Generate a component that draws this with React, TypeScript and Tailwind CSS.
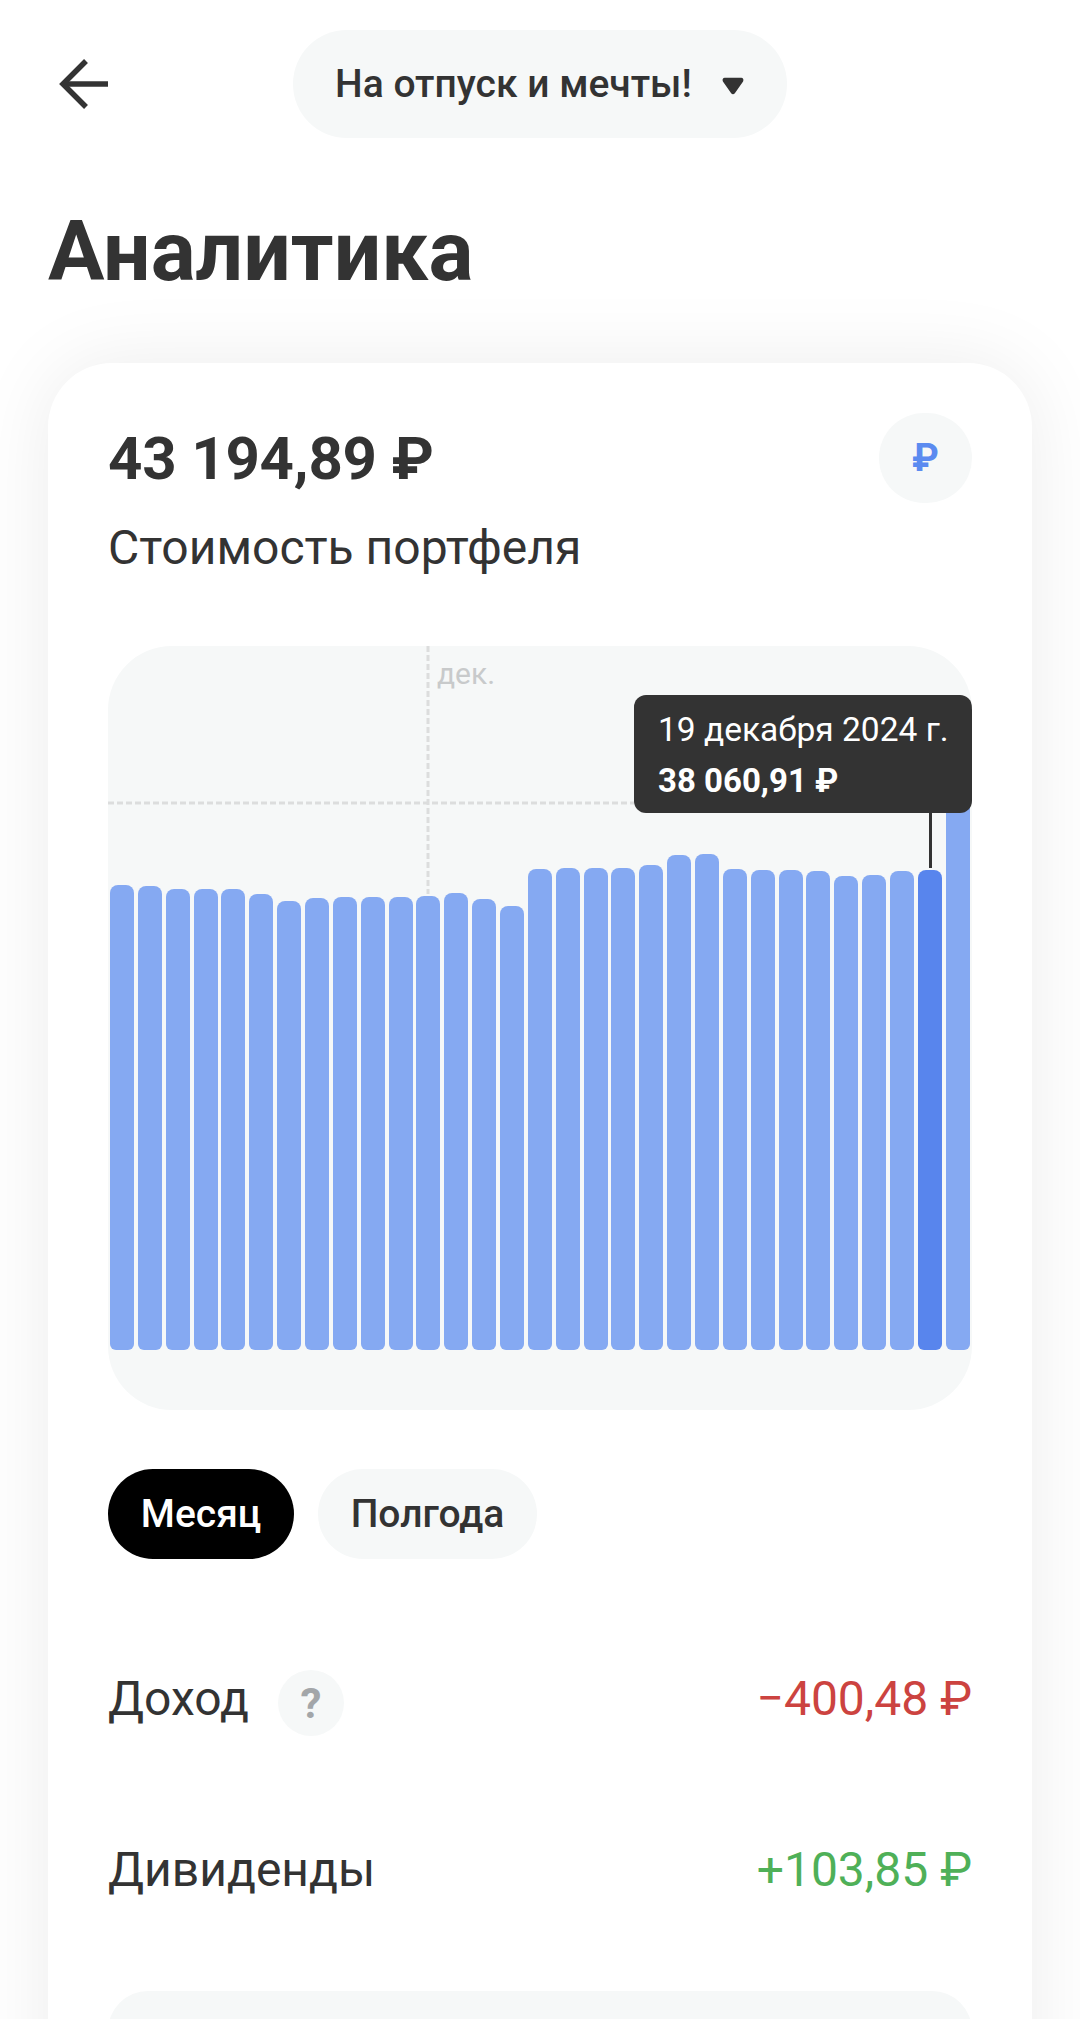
const BAR_TOPS = [
  883, 884, 887, 887, 887, 892, 899, 896, 895, 895, 895, 894, 891, 897, 904, 867, 866,
  866, 866, 863, 853, 852, 867, 868, 868, 869, 874, 873, 869, 868, 780,
];
const CHART_BOTTOM = 1348;
const SELECTED = 29;

function Bars() {
  return (
    <div className="absolute left-[2px] right-[2px] bottom-[60px] flex items-end justify-between">
      {BAR_TOPS.map((top, i) => (
        <div
          key={i}
          className={`w-[24px] rounded-t-[8px] rounded-b-[6px] ${i === SELECTED ? 'bg-[#5885ed]' : 'bg-[#85a9f2]'}`}
          style={{ height: CHART_BOTTOM - top }}
        />
      ))}
    </div>
  );
}

function Chart() {
  return (
    <div className="relative h-[764px] overflow-hidden rounded-[64px] bg-[#f6f8f8]">
      {/* dashed guides */}
      <svg className="absolute left-0 top-0" width="864" height="300" fill="none">
        <path d="M0 157H540" stroke="#dcdddd" strokeWidth="3" strokeDasharray="6 3" />
        <path d="M320 0V248" stroke="#dcdddd" strokeWidth="3" strokeDasharray="6 3" />
      </svg>
      <span className="absolute left-[329px] top-[10px] text-[30px] leading-[36px] text-[#c8cacb]">дек.</span>
      <Bars />
      <div className="absolute left-[821px] top-[160px] h-[62px] w-[3px] bg-[#333333]" />
      <div className="absolute right-0 top-[49px] flex h-[118px] w-[338px] flex-col rounded-[12px] bg-[#333333] pl-[24px] pt-[13px] text-white">
        <span className="text-[33.5px] leading-[44px]">19 декабря 2024 г.</span>
        <span className="mt-[7px] text-[33px] font-bold leading-[44px]">38 060,91 ₽</span>
      </div>
    </div>
  );
}

function StatRow({ label, value, color, help }: { label: string; value: string; color: string; help?: boolean }) {
  return (
    <div className="flex h-[66px] items-center justify-between">
      <div className="flex items-center">
        <span className="-mt-[8px] text-[48px] leading-[60px] text-[#333333]">{label}</span>
        {help && (
          <span className="ml-[29px] flex h-[66px] w-[66px] items-center justify-center rounded-full bg-[#f6f8f8] text-[42px] font-bold text-[#a3a6a9]">
            ?
          </span>
        )}
      </div>
      <span className={`-mt-[8px] text-[48px] leading-[60px] ${color}`}>{value}</span>
    </div>
  );
}

export default function App() {
  return (
    <div className="relative h-[2019px] w-[1080px] overflow-hidden bg-white font-['Roboto',sans-serif] text-[#333333]">
      {/* top bar */}
      <div className="relative flex h-[138px] items-end justify-center">
        <svg className="absolute left-[56px] top-[56px]" width="56" height="56" viewBox="0 0 56 56" fill="none" stroke="#333333" strokeWidth="5.5">
          <path d="M52 28H7" />
          <path d="M30 5L7 28L30 51" />
        </svg>
        <div className="flex h-[108px] w-[494px] items-center rounded-full bg-[#f6f8f8] pl-[42px]">
          <span className="text-[39px] font-medium leading-[50px]">На отпуск и мечты!</span>
          <svg className="ml-[30px] mt-[3px]" width="22" height="20" viewBox="0 0 24 20" fill="#333333">
            <path d="M3 1H21C23 1 24 3 23 5L14 18C13 19.500 11 19.500 10 18L1 5C0 3 1 1 3 1Z" />
          </svg>
        </div>
      </div>

      <h1 className="ml-[48px] mt-[64px] text-[84px] font-bold leading-[100px]">Аналитика</h1>

      {/* card */}
      <div className="mx-[48px] mt-[61px] h-[1800px] rounded-[64px] bg-white px-[60px] pt-[57px] shadow-[0_0_80px_rgba(0,0,0,0.08)]">
        <div className="flex items-start justify-between">
          <div>
            <div className="text-[60px] font-bold leading-[78px] tracking-[-0.2px]">43 194,89 ₽</div>
            <div className="mt-[20px] text-[48px] leading-[60px]">Стоимость портфеля</div>
          </div>
          <div className="-mt-[7px] flex h-[90px] w-[93px] items-center justify-center rounded-full bg-[#f6f8f8] text-[38px] font-bold text-[#5b8bf0]">
            ₽
          </div>
        </div>

        <div className="mt-[68px]">
          <Chart />
        </div>

        <div className="mt-[59px] flex gap-[24px]">
          <div className="flex h-[90px] w-[186px] items-center justify-center rounded-full bg-black text-[39px] font-medium text-white">
            Месяц
          </div>
          <div className="flex h-[90px] w-[219px] items-center justify-center rounded-full bg-[#f6f8f8] text-[39px] font-medium">
            Полгода
          </div>
        </div>

        <div className="mt-[111px] flex flex-col gap-[105px]">
          <StatRow label="Доход" value="−400,48 ₽" color="text-[#cc4340]" help />
          <StatRow label="Дивиденды" value="+103,85 ₽" color="text-[#4fb058]" />
        </div>

        <div className="mt-[84px] h-[200px] rounded-[40px] bg-[#f6f8f8]" />
      </div>
    </div>
  );
}
